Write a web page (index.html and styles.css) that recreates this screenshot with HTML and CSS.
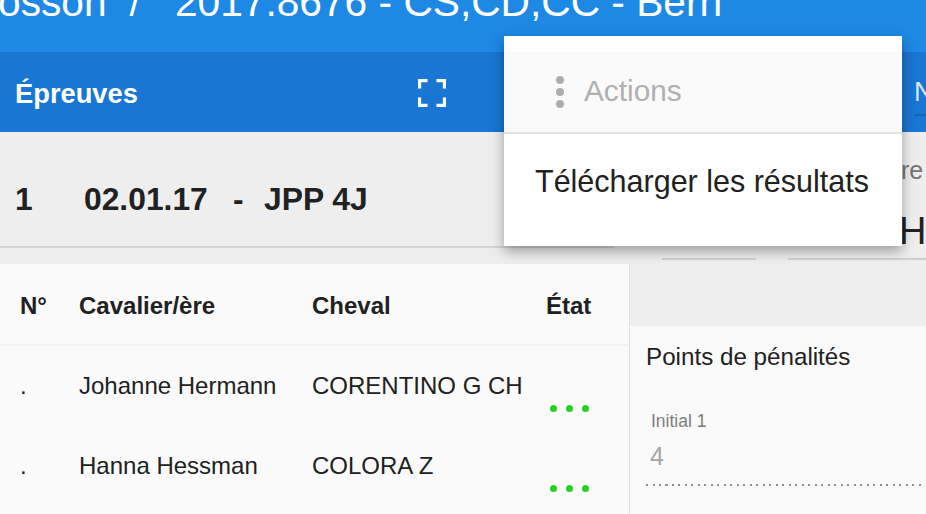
FILE: index.html
```html
<!DOCTYPE html>
<html lang="fr">
<head>
<meta charset="utf-8">
<title>Épreuves</title>
<link rel="stylesheet" href="styles.css">
</head>
<body>
<div class="page">
  <header class="topbar"><div class="crumb"><span>osson</span><span class="slash">/</span><span>2017.8676 - CS,CD,CC - Bern</span></div></header>
  <div class="toolbar">
    <div class="toolbar-left">
      <h1>Épreuves</h1>
      <svg class="fullscreen" width="28" height="28" viewBox="0 0 28 28" aria-hidden="true"><path d="M1.500 9.500V1.500h8M18.500 1.500h8v8M26.500 18.500v8h-8M9.500 26.500h-8v-8" fill="none" stroke="#fff" stroke-width="3.300"/></svg>
    </div>
    <div class="toolbar-right"><span class="field-n">N</span></div>
  </div>
  <main class="content">
    <section class="left">
      <div class="event"><span class="event-num">1</span><span class="event-date">02.01.17</span><span class="event-dash">-</span><span>JPP 4J</span></div>
      <div class="event-rule"></div>
      <div class="table">
        <div class="row head"><span>N°</span><span>Cavalier/ère</span><span>Cheval</span><span>État</span></div>
        <div class="row"><span>.</span><span>Johanne Hermann</span><span>CORENTINO G CH</span><span class="dots"><i></i><i></i><i></i></span></div>
        <div class="row"><span>.</span><span>Hanna Hessman</span><span>COLORA Z</span><span class="dots"><i></i><i></i><i></i></span></div>
      </div>
    </section>
    <section class="right">
      <div class="right-head">
        <div class="re">re</div>
        <div class="he">He</div>
        <div class="rules"><i></i><i></i></div>
      </div>
      <div class="card">
        <h2>Points de pénalités</h2>
        <label>Initial 1</label>
        <div class="value">4</div>
      </div>
    </section>
  </main>
  <div class="menu">
    <div class="menu-head">
      <svg width="10" height="32" viewBox="0 0 10 32" aria-hidden="true"><circle cx="5" cy="4" r="4" fill="#adadad"/><circle cx="5" cy="16" r="4" fill="#adadad"/><circle cx="5" cy="28" r="4" fill="#adadad"/></svg>
      <span>Actions</span>
    </div>
    <div class="menu-item">Télécharger les résultats</div>
  </div>
</div>
</body>
</html>
```
FILE: styles.css
```css
* { box-sizing: border-box; }
html, body { margin: 0; padding: 0; }
body { font-family: "Liberation Sans", Arial, sans-serif; color: #212121; }
.page { position: relative; width: 926px; height: 514px; overflow: hidden; background: #eee; }

.topbar { height: 52px; background: #1e88e5; color: #fff; overflow: hidden; }
.crumb { display: flex; font-size: 40.700px; line-height: 40px; margin: -18px 0 0 -2px; white-space: nowrap; }
.slash { margin: 0 34px 0 23px; }

.toolbar { height: 80px; background: #1976d2; display: flex; color: #fff; }
.toolbar-left { width: 630px; display: flex; align-items: center; padding-left: 15px; }
.toolbar-left h1 { margin: 0; font-size: 27.300px; font-weight: 700; width: 403px; line-height: 30px; position: relative; top: 2px; }
.fullscreen { display: block; position: relative; top: 1px; }
.toolbar-right { flex: 1; padding: 24px 0 0 284px; overflow: hidden; }
.field-n { display: block; width: 30px; height: 40px; font-size: 27px; line-height: 32px; color: #d7e6f6; border-bottom: 2px solid #1565b5; }

.content { display: flex; height: 382px; }
.left { width: 630px; }
.event { height: 114px; padding: 20px 0 0 15px; display: flex; align-items: center; font-size: 31.800px; font-weight: 700; white-space: nowrap; }
.event-num { width: 69px; }
.event-date { width: 149px; }
.event-dash { width: 31px; }
.event-rule { height: 2px; background: #d5d5d5; width: 614px; }
.table { margin-top: 16px; height: 250px; background: #fafafa; border-right: 1px solid #e0e0e0; }
.row { display: grid; grid-template-columns: 59px 233px 234px 1fr; padding-left: 20px; height: 80px; font-size: 24px; line-height: 40px; padding-top: 20px; }
.row.head { height: 82px; padding-top: 22px; font-weight: 700; border-bottom: 2px solid #f2f2f2; }
.dots { display: flex; gap: 9px; padding: 39px 0 0 4px; }
.dots i { width: 7px; height: 7px; border-radius: 50%; background: #22d322; }

.right { flex: 1; display: flex; flex-direction: column; overflow: hidden; }
.right-head { height: 194px; }
.re { font-size: 25px; line-height: 30px; color: #757575; padding: 23px 0 0 271px; }
.he { font-size: 38px; line-height: 44px; padding: 24px 0 0 269px; white-space: nowrap; }
.rules { display: flex; gap: 32px; margin-top: 5px; padding-left: 32px; }
.rules i { height: 2px; width: 94px; background: #d0d0d0; }
.rules i:last-child { width: 138px; }
.card { flex: 1; background: #fafafa; padding: 18px 0 0 16px; }
.card h2 { margin: 0; font-size: 24.200px; font-weight: 400; line-height: 26px; }
.card label { display: block; margin: 41px 0 0 5px; font-size: 17.500px; line-height: 20px; color: #7d7d7d; }
.value { margin-top: 10px; font-size: 25px; line-height: 30px; padding-left: 4px; height: 45px; color: #a5a5a5; background: repeating-linear-gradient(90deg, #909090 0 2px, transparent 2px 6.500px) left bottom / 100% 2px no-repeat; width: 276px; }

.menu { position: absolute; left: 504px; top: 36px; width: 398px; height: 210px; background: #fff; box-shadow: 0 5px 12px rgba(0,0,0,.35); padding-top: 16px; }
.menu-head { height: 82px; background: #fafafa; border-bottom: 2px solid #e2e2e2; display: flex; align-items: center; padding-left: 51px; color: #b0b0b0; font-size: 29.800px; }
.menu-head span { margin-left: 19px; position: relative; top: -1px; }
.menu-item { font-size: 30.500px; padding: 30px 0 0 31px; line-height: 34px; white-space: nowrap; }
```
